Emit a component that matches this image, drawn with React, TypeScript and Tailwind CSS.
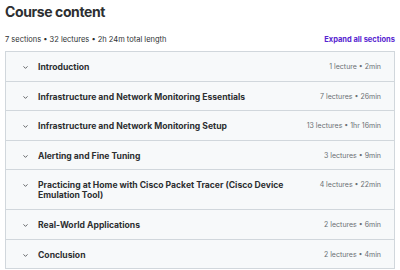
import { ChevronDown } from "lucide-react";

const sections = [
  { title: "Introduction", meta: "1 lecture • 2min" },
  { title: "Infrastructure and Network Monitoring Essentials", meta: "7 lectures • 26min" },
  { title: "Infrastructure and Network Monitoring Setup", meta: "13 lectures • 1hr 16min" },
  { title: "Alerting and Fine Tuning", meta: "3 lectures • 9min" },
  {
    title: "Practicing at Home with Cisco Packet Tracer (Cisco Device Emulation Tool)",
    meta: "4 lectures • 22min",
  },
  { title: "Real-World Applications", meta: "2 lectures • 6min" },
  { title: "Conclusion", meta: "2 lectures • 4min" },
];

export default function App() {
  return (
    <div className="h-[270px] w-[400px] overflow-hidden bg-white px-[5px] pt-[3px] font-['Inter',sans-serif] text-[#2d2f31]">
      <h2 className="text-[14px] font-bold leading-[18px] tracking-[-0.4px]">Course content</h2>

      <div className="mt-[14px] flex items-end justify-between">
        <span className="text-[7.5px] leading-[10px] text-[#2d2f31]">
          7 sections • 32 lectures • 2h 24m total length
        </span>
        <button className="text-[7.5px] font-bold leading-[10px] text-[#5624d0]">
          Expand all sections
        </button>
      </div>

      <div className="mt-[6px] border border-[#d1d7dc]">
        {sections.map((s, i) => (
          <div
            key={s.title}
            className={`flex items-start bg-[#f7f9fa] pb-[8.6px] pl-[16px] pr-[13px] pt-[10px] ${
              i > 0 ? "border-t border-[#d1d7dc]" : ""
            }`}
          >
            <ChevronDown className="mt-[2px] h-[7px] w-[7px] shrink-0 text-[#2d2f31]" strokeWidth={2.5} />
            <h3 className="ml-[9px] flex-1 pr-[34px] text-[8.6px] font-bold leading-[10px]">{s.title}</h3>
            <span className="shrink-0 text-[7px] leading-[10px] text-[#6a6f73]">{s.meta}</span>
          </div>
        ))}
      </div>
    </div>
  );
}
